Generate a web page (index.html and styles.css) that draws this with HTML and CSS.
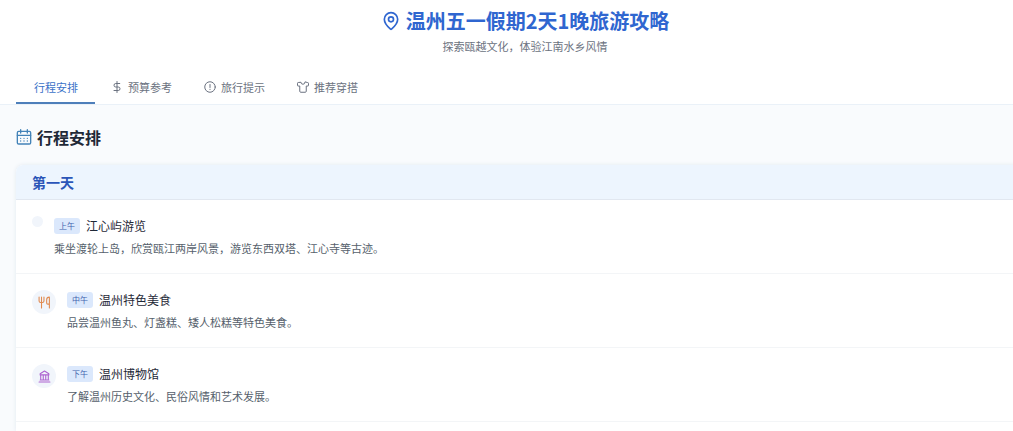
FILE: index.html
```html
<!DOCTYPE html>
<html lang="zh-CN">
<head>
<meta charset="utf-8">
<title>温州五一假期2天1晚旅游攻略</title>
<link rel="stylesheet" href="styles.css">
</head>
<body>
<div class="page">
  <header class="header">
    <div class="brand">
      <svg class="pin" viewBox="0 0 24 24" aria-hidden="true"><path d="M20 10c0 5-5.500 10.200-7.400 11.800a1 1 0 0 1-1.200 0C9.500 20.200 4 15 4 10a8 8 0 0 1 16 0Z"/><circle cx="12" cy="10" r="3"/></svg>
      <h1 class="title">温州五一假期2天1晚旅游攻略</h1>
    </div>
    <p class="subtitle">探索瓯越文化，体验江南水乡风情</p>
    <nav class="tabs">
      <button class="tab active" type="button">行程安排</button>
      <button class="tab" type="button"><svg class="tab-icon" viewBox="0 0 24 24" aria-hidden="true"><path d="M12 1v22M17.500 5H9.500a3.500 3.500 0 0 0 0 7h5a3.500 3.500 0 0 1 0 7H6"/></svg>预算参考</button>
      <button class="tab" type="button"><svg class="tab-icon" viewBox="0 0 24 24" aria-hidden="true"><circle cx="12" cy="12" r="10.500"/><path d="M12 7v6M12 16.500v.5"/></svg>旅行提示</button>
      <button class="tab" type="button"><svg class="tab-icon" viewBox="0 0 24 24" aria-hidden="true"><path d="M16 2.500a4 4 0 0 1-8 0L2.500 3a1.500 1.500 0 0 0-1.500 1.500V9a1 1 0 0 0 1 1h3.500v10.500a2 2 0 0 0 2 2h9a2 2 0 0 0 2-2V10H22a1 1 0 0 0 1-1V4.500A1.500 1.500 0 0 0 21.500 3Z"/></svg>推荐穿搭</button>
    </nav>
  </header>
  <main class="main">
    <h2 class="section-title">
      <svg class="calendar" viewBox="0 0 24 24" aria-hidden="true"><path d="M7 1v5M17 1v5M2 9.500h20"/><rect x="2" y="3.500" width="20" height="19" rx="2"/><path d="M7 14h.01M12 14h.01M17 14h.01M7 18h.01M12 18h.01M17 18h.01"/></svg>
      行程安排
    </h2>
    <section class="card">
      <h3 class="day">第一天</h3>
      <ul class="items">
        <li class="item">
          <span class="dot"></span>
          <div class="body">
            <div class="line"><span class="badge">上午</span><h4 class="name">江心屿游览</h4></div>
            <p class="desc">乘坐渡轮上岛，欣赏瓯江两岸风景，游览东西双塔、江心寺等古迹。</p>
          </div>
        </li>
        <li class="item">
          <span class="dot filled food"><svg class="dot-icon" viewBox="0 0 24 24" aria-hidden="true"><path d="M2 2v7a3 3 0 0 0 3 3h3a3 3 0 0 0 3-3V2M6.500 2v20M21 15V2a5 5 0 0 0-5 5v6a2 2 0 0 0 2 2h3v7"/></svg></span>
          <div class="body">
            <div class="line"><span class="badge">中午</span><h4 class="name">温州特色美食</h4></div>
            <p class="desc">品尝温州鱼丸、灯盏糕、矮人松糕等特色美食。</p>
          </div>
        </li>
        <li class="item">
          <span class="dot filled museum"><svg class="dot-icon" viewBox="0 0 24 24" aria-hidden="true"><path d="M2 22h20M4 18.500h16M5 18V10M9.700 18V10M14.300 18V10M19 18V10M12 2l8 5v2H4V7Z"/></svg></span>
          <div class="body">
            <div class="line"><span class="badge">下午</span><h4 class="name">温州博物馆</h4></div>
            <p class="desc">了解温州历史文化、民俗风情和艺术发展。</p>
          </div>
        </li>
      </ul>
    </section>
  </main>
</div>
</body>
</html>
```
FILE: styles.css
```css
* { box-sizing: border-box; }
html { overflow: hidden; }
body {
  margin: 0;
  background: #f9fbfd;
  color: #1f2937;
  font-family: "Noto Sans CJK SC", sans-serif;
}
h1, h2, h3, h4, p, ul { margin: 0; padding: 0; }
svg {
  flex: none;
  fill: none;
  stroke: currentColor;
  stroke-width: 2;
  stroke-linecap: round;
  stroke-linejoin: round;
}
/* the page runs slightly past the right edge of the window */
.page { width: calc(100% + 37px); }
.header {
  background: #fff;
  border-bottom: 1px solid #eaf1f8;
  padding: 6px 16px 0;
}
.brand {
  display: flex;
  justify-content: center;
  align-items: center;
  gap: 5px;
  color: #2f66d0;
}
.pin { width: 20px; height: 20px; }
.title { font-size: 20px; line-height: 30px; font-weight: 700; }
.subtitle {
  margin-top: 1px;
  text-align: center;
  font-size: 11px;
  line-height: 18px;
  color: #6b7280;
}
.tabs { display: flex; margin-top: 16px; }
.tab {
  display: flex;
  align-items: center;
  gap: 5px;
  height: 33px;
  padding: 0 16px;
  border: 0;
  border-bottom: 2px solid transparent;
  background: none;
  font: inherit;
  font-size: 11px;
  color: #6b7280;
}
.tab.active { padding: 0 17px 0 18px; color: #3b72c8; border-color: #4e7fba; }
.tab-icon { width: 12px; height: 12px; }
.main { padding: 20px 16px 0; }
.section-title {
  display: flex;
  align-items: center;
  gap: 5px;
  font-size: 16px;
  line-height: 24px;
  font-weight: 700;
}
.calendar { width: 16px; height: 16px; color: #4383b8; }
.card {
  margin-top: 16px;
  background: #fff;
  border-radius: 7px 7px 0 0;
  box-shadow: 0 0 4px #e3e9f0;
  overflow: hidden;
}
.day {
  padding: 5px 16px;
  background: #edf5fe;
  border-bottom: 1px solid #e1e7f0;
  font-size: 14px;
  line-height: 24px;
  font-weight: 700;
  color: #2b55b8;
}
.items { list-style: none; padding-bottom: 9px; }
.item {
  display: flex;
  align-items: flex-start;
  gap: 11px;
  padding: 16px 16px 17px;
  border-bottom: 1px solid #f3f5f7;
}
.dot {
  display: flex;
  align-items: center;
  justify-content: center;
  flex: none;
  width: 11px;
  height: 11px;
  border-radius: 50%;
  background: #f1f5fb;
}
.dot.filled { width: 24px; height: 24px; }
.dot-icon { width: 13px; height: 13px; }
.food { color: #e08a50; }
.museum { color: #ad62d0; }
.line { display: flex; align-items: center; gap: 6px; height: 20px; }
.badge {
  padding: 0 5px;
  border-radius: 3px;
  background: #dbe8fc;
  font-size: 8px;
  line-height: 16px;
  color: #3f62ad;
}
.name { font-size: 12px; line-height: 20px; font-weight: 400; }
.desc { margin-top: 4px; font-size: 11px; line-height: 16px; color: #565f6c; }
```
